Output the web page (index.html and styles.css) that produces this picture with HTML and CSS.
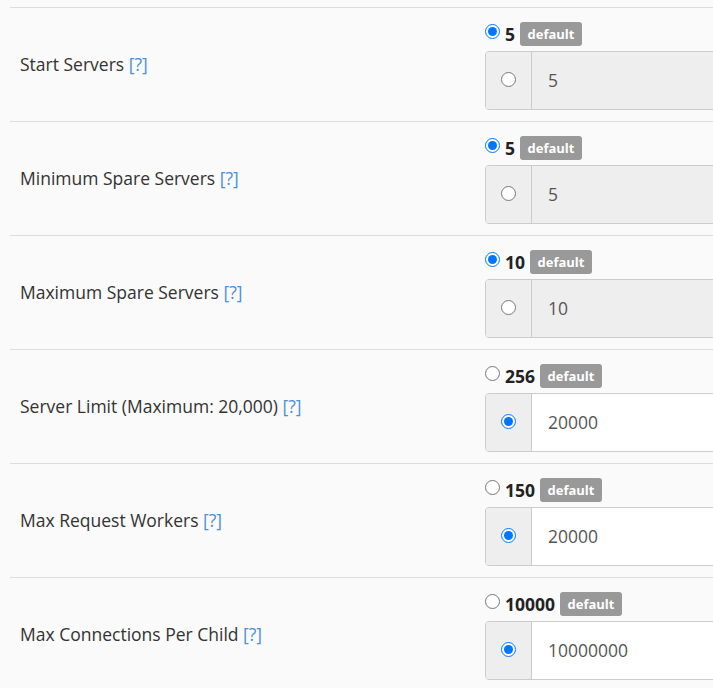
FILE: index.html
```html
<html lang="en">

<head>
  <meta charset="utf-8" />
  <title>Apache MPM settings</title>
  <meta name="viewport" content="width=device-width, initial-scale=1" />
  <link rel="stylesheet" href="styles.css">
</head>

<body>
  <div class="settings">
    <div class="row">
      <div class="label">Start Servers <a href="#" class="help">[?]</a></div>
      <div class="value">
        <label class="choice">
          <input type="radio" name="start" checked>
          <b class="num">5</b>
          <span class="badge">default</span>
        </label>
        <div class="input-group">
          <span class="addon"><input type="radio" name="start"></span>
          <input type="text" class="field" value="5" disabled>
        </div>
      </div>
    </div>

    <div class="row">
      <div class="label">Minimum Spare Servers <a href="#" class="help">[?]</a></div>
      <div class="value">
        <label class="choice">
          <input type="radio" name="minspare" checked>
          <b class="num">5</b>
          <span class="badge">default</span>
        </label>
        <div class="input-group">
          <span class="addon"><input type="radio" name="minspare"></span>
          <input type="text" class="field" value="5" disabled>
        </div>
      </div>
    </div>

    <div class="row">
      <div class="label">Maximum Spare Servers <a href="#" class="help">[?]</a></div>
      <div class="value">
        <label class="choice">
          <input type="radio" name="maxspare" checked>
          <b class="num">10</b>
          <span class="badge">default</span>
        </label>
        <div class="input-group">
          <span class="addon"><input type="radio" name="maxspare"></span>
          <input type="text" class="field" value="10" disabled>
        </div>
      </div>
    </div>

    <div class="row">
      <div class="label">Server Limit (Maximum: 20,000) <a href="#" class="help">[?]</a></div>
      <div class="value">
        <label class="choice">
          <input type="radio" name="limit">
          <b class="num">256</b>
          <span class="badge">default</span>
        </label>
        <div class="input-group">
          <span class="addon"><input type="radio" name="limit" checked></span>
          <input type="text" class="field" value="20000">
        </div>
      </div>
    </div>

    <div class="row">
      <div class="label">Max Request Workers <a href="#" class="help">[?]</a></div>
      <div class="value">
        <label class="choice">
          <input type="radio" name="workers">
          <b class="num">150</b>
          <span class="badge">default</span>
        </label>
        <div class="input-group">
          <span class="addon"><input type="radio" name="workers" checked></span>
          <input type="text" class="field" value="20000">
        </div>
      </div>
    </div>

    <div class="row">
      <div class="label">Max Connections Per Child <a href="#" class="help">[?]</a></div>
      <div class="value">
        <label class="choice">
          <input type="radio" name="perchild">
          <b class="num">10000</b>
          <span class="badge">default</span>
        </label>
        <div class="input-group">
          <span class="addon"><input type="radio" name="perchild" checked></span>
          <input type="text" class="field" value="10000000">
        </div>
      </div>
    </div>
  </div>
</body>

</html>
```

FILE: styles.css
```css
html {
  overflow: hidden;
}

body {
  font-family: 'Open Sans', sans-serif;
  font-size: 17.5px;
  line-height: 1.4;
  color: #333;
  background: #fafafa;
  margin: 0;
}

* {
  box-sizing: border-box;
}

a {
  text-decoration: none;
}

.settings {
  margin: 7px 0 0 10px;
  overflow: hidden;
}

.row {
  display: flex;
  align-items: center;
  border-top: 1px solid #ddd;
}

.label {
  width: 475px;
  flex-shrink: 0;
  padding-left: 10px;
}

.help {
  color: #4a90d9;
}

.value {
  flex: 1;
  padding: 14px 0 11px;
}

.choice {
  display: flex;
  align-items: center;
  height: 24px;
}

.choice input {
  width: 15px;
  height: 15px;
  margin: -6px 5px 0 0;
}

.num {
  font-weight: 700;
  color: #222;
  margin-right: 5px;
}

.badge {
  display: inline-block;
  background: #999;
  color: #fff;
  font-size: 13px;
  font-weight: 700;
  line-height: 14px;
  padding: 5px 7.5px;
  border-radius: 3px;
}

.input-group {
  display: flex;
  width: 270px;
  height: 59px;
  margin-top: 5px;
  border: 1px solid #ccc;
  border-radius: 4px;
  overflow: hidden;
}

.addon {
  width: 46px;
  flex-shrink: 0;
  display: flex;
  align-items: center;
  justify-content: center;
  background: #eee;
  border-right: 1px solid #ccc;
}

.addon input {
  width: 15px;
  height: 15px;
  margin: -3px 0 0 0;
}

.field {
  flex: 1;
  min-width: 0;
  border: 0;
  padding: 0 15px 2px 16px;
  font-family: 'Open Sans', sans-serif;
  font-size: 17.5px;
  color: #555;
  background: #fff;
  outline: none;
}

.field:disabled {
  background: #eee;
  color: #555;
}
```
